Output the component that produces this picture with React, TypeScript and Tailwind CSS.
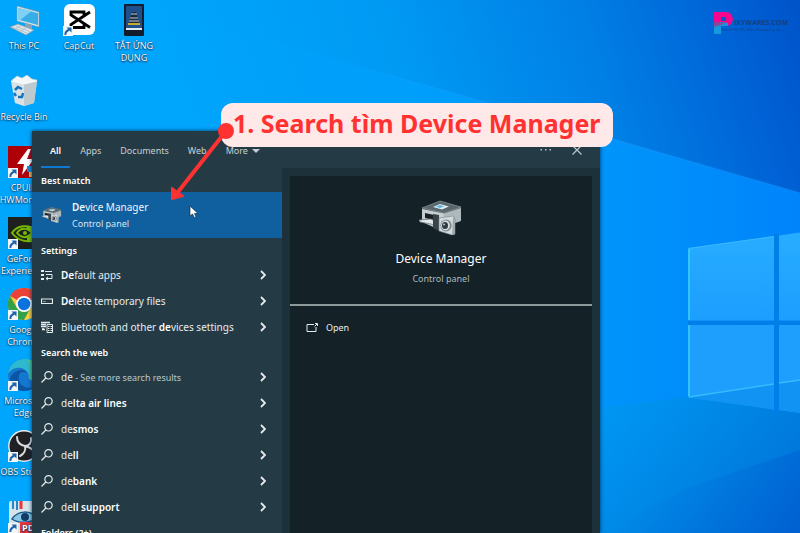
import { clsx } from 'clsx';
import { type ReactNode, useState } from 'react';

interface TextPart {
  text: string;
  strong?: boolean;
  muted?: boolean;
}

interface ResultItem {
  id: string;
  icon: ReactNode;
  parts: TextPart[];
}

interface Shortcut {
  name: string;
  icon: ReactNode;
  linked?: boolean;
  hideLabel?: boolean;
}

const TABS = ['All', 'Apps', 'Documents', 'Web'];

function Wallpaper() {
  return (
    <svg
      className="absolute inset-0 size-full"
      viewBox="0 0 800 533"
      preserveAspectRatio="none"
      aria-hidden="true"
    >
      <defs>
        <linearGradient id="sky" gradientUnits="userSpaceOnUse" x1="150" y1="230" x2="800" y2="20">
          <stop offset="0.1" stopColor="#00a6fc" />
          <stop offset="0.42" stopColor="#009af3" />
          <stop offset="0.7" stopColor="#007fe5" />
          <stop offset="0.9" stopColor="#0062d6" />
          <stop offset="1" stopColor="#0054ca" />
        </linearGradient>
        <linearGradient id="beam" gradientUnits="userSpaceOnUse" x1="200" y1="0" x2="800" y2="0">
          <stop offset="0" stopColor="#00a4fc" stopOpacity="0" />
          <stop offset="0.35" stopColor="#009ffc" />
          <stop offset="0.65" stopColor="#0096fb" />
          <stop offset="1" stopColor="#0084fa" />
        </linearGradient>
        <linearGradient id="ray" gradientUnits="userSpaceOnUse" x1="330" y1="0" x2="800" y2="0">
          <stop offset="0" stopColor="#1ba0ff" stopOpacity="0" />
          <stop offset="0.4" stopColor="#1ba0ff" stopOpacity="0.5" />
          <stop offset="1" stopColor="#1b90ff" stopOpacity="0.3" />
        </linearGradient>
        <linearGradient id="floor" gradientUnits="userSpaceOnUse" x1="600" y1="400" x2="780" y2="540">
          <stop offset="0" stopColor="#0098f4" />
          <stop offset="0.5" stopColor="#0086e5" />
          <stop offset="1" stopColor="#0070d7" />
        </linearGradient>
        <linearGradient id="deep" gradientUnits="userSpaceOnUse" x1="670" y1="450" x2="790" y2="533">
          <stop offset="0" stopColor="#0078de" stopOpacity="0" />
          <stop offset="1" stopColor="#0062d2" />
        </linearGradient>
        <linearGradient id="pane" x1="0" y1="0" x2="0" y2="1">
          <stop offset="0" stopColor="#27adff" />
          <stop offset="1" stopColor="#1c9eff" />
        </linearGradient>
      </defs>
      <rect width="800" height="533" fill="url(#sky)" />
      <path d="M200 20L400 78L800 193V533H200Z" fill="url(#beam)" />
      <path d="M330 58L400 78L800 193" fill="none" stroke="url(#ray)" strokeWidth="1.500" />
      <path d="M560 412L688 397L800 413V533H560Z" fill="url(#floor)" />
      <path d="M600 533L690 487L800 450V533Z" fill="url(#deep)" />
      <path d="M774 234H779V412H774ZM688 320.500H800V325H688Z" fill="#007fe8" />
      <path d="M688 248L774 236V320.500H688ZM779 235.500L800 232.500V320.500H779Z" fill="url(#pane)" />
      <path d="M688 325H774V409.500L688 397.500ZM779 325H800V413L779 410Z" fill="#1f9ffd" />
      <path d="M688 397.500L774 384V409.500ZM779 383L800 380V413L779 410Z" fill="#0b8eee" fillOpacity="0.7" />
      <path d="M689 396V325M689 320V249" fill="none" stroke="#3ad0ff" strokeWidth="1.500" />
      <path d="M689 248.500L774 236.500" stroke="#3ab8ff" />
      <path d="M689 397L774 384M779 383L800 380" stroke="#35bcff" strokeWidth="1.500" />
    </svg>
  );
}

function PcIcon() {
  return (
    <svg viewBox="0 0 32 32" className="size-8">
      <path d="M9 2L31 8V23L9 17Z" fill="#d5e4ec" stroke="#7c98a8" strokeWidth="0.6" />
      <path d="M10.500 4L30 9.300V21L10.500 15.800Z" fill="#38aee8" />
      <path d="M10.500 4L23 7.500L12 16.200L10.500 15.800Z" fill="#7fd0f5" />
      <path d="M17 19L24 21V25L17 23Z" fill="#8ba3b0" />
      <path d="M2 23L10 20L26 26L18 31Z" fill="#dce6ea" stroke="#8799a3" strokeWidth="0.7" />
      <path d="M5 23.500L19 29M8 22.300L22 27.500M8 25L13 21.500M13 27L18 23.500" stroke="#a6b5bd" strokeWidth="0.7" />
    </svg>
  );
}

function CapCutIcon() {
  return (
    <svg viewBox="0 0 32 32" className="size-8">
      <rect x="1" width="31" height="31" rx="6" fill="#fff" />
      <path
        d="M27 8L8 20.500V23.500H21V20.500M27 23.500L8 11V8H21V11"
        fill="none"
        stroke="#000"
        strokeWidth="2.800"
      />
    </svg>
  );
}

function PhoneIcon() {
  return (
    <svg viewBox="0 0 32 32" className="size-8">
      <rect x="6" y="0" width="20" height="32" rx="1" fill="#131c2d" />
      <rect x="8" y="2" width="16" height="22" fill="#20508c" />
      <path d="M14 8H18L22 21H10Z" fill="#182b3c" />
      <path d="M13 10H19M12 14H20M11 17H21" stroke="#c8ccd2" />
      <path d="M10 20H22" stroke="#c9ab32" strokeWidth="2" />
      <path d="M8 25H24" stroke="#e6edf2" strokeWidth="2" />
    </svg>
  );
}

function BinIcon() {
  return (
    <svg viewBox="0 0 32 32" className="size-8">
      <path d="M4 5L9 1L14 3L19 0L24 4L29 5L26 12H6Z" fill="#f4f7f8" stroke="#b8c4ca" strokeWidth="0.6" />
      <path d="M3 6L16 9L29 6L26 28L16 31L7 28Z" fill="#d9e2e6" />
      <path d="M16 9L29 6L26 28L16 31Z" fill="#bdcad0" />
      <path d="M3 6L16 9L29 6" fill="none" stroke="#f7fafb" />
      <path d="M7 15L10 12L14 14M15 18L14 22L10 22M8 21L6 18" fill="none" stroke="#1673bd" strokeWidth="2.500" />
    </svg>
  );
}

function CpuIcon() {
  return (
    <svg viewBox="0 0 32 32" className="size-8">
      <rect width="32" height="32" fill="#ad0009" />
      <path d="M20 3L9 18H16L14 29L26 13H19L23 3Z" fill="#fff" />
      <path d="M19 20H32V26H19Z" fill="#1687d4" />
      <path d="M21 26H32V31H21Z" fill="#e6b84c" />
    </svg>
  );
}

function GeForceIcon() {
  return (
    <svg viewBox="0 0 32 32" className="size-8">
      <rect width="32" height="32" fill="#1d201f" />
      <path d="M4 16C9 8 20 7 29 13V23C20 26 10 24 4 16Z" fill="none" stroke="#77b900" strokeWidth="2" />
      <path d="M9 16C13 10 20 11 24 16C19 22 13 21 9 16Z" fill="none" stroke="#77b900" strokeWidth="2" />
      <circle cx="17" cy="16" r="2" fill="#77b900" />
      <path d="M19 9H29V24H19V21L25 16L19 12Z" fill="#77b900" />
    </svg>
  );
}

function ChromeIcon() {
  return (
    <svg viewBox="0 0 32 32" className="size-8">
      <circle cx="16" cy="16" r="16" fill="#ffcd41" />
      <path d="M16 16L2.100 8A16 16 0 0 1 29.900 8Z" fill="#ea4236" />
      <path d="M2.100 8A16 16 0 0 0 16 32L22.500 20L16 16L9 20Z" fill="#34a048" />
      <circle cx="16" cy="16" r="8" fill="#fff" />
      <circle cx="16" cy="16" r="6.200" fill="#0a73e0" />
    </svg>
  );
}

function EdgeIcon() {
  return (
    <svg viewBox="0 0 32 32" className="size-8">
      <circle cx="16" cy="16" r="16" fill="#1477d0" />
      <path d="M0 15C1 5 9 0 16 0C26 0 32 7 32 15C32 20 28 22 23 21C19 20 22 18 20 14C16 7 5 7 0 15Z" fill="#2fb9cf" />
      <path d="M18 0C27 1 32 8 32 15C32 20 28 22 23 21C20 19 26 6 18 0Z" fill="#4cca90" />
      <path d="M11 16C9 26 18 31 26 28C20 35 2 33 2 20C4 12 15 8 19 14C15 12 12 13 11 16Z" fill="#0b56a4" />
    </svg>
  );
}

function ObsIcon() {
  return (
    <svg viewBox="0 0 32 32" className="size-8">
      <circle cx="16" cy="16" r="15.200" fill="#201f22" stroke="#e8ecef" strokeWidth="1.400" />
      <path
        d="M9 7C9 12 12 15 17 16C21 16 24 13 23 8M17 16C18 20 16 24 12 26M17 16C21 17 25 19 27 23"
        fill="none"
        stroke="#d8dde0"
        strokeWidth="2"
        strokeLinecap="round"
      />
    </svg>
  );
}

function PdfIcon() {
  return (
    <svg viewBox="0 0 32 32" className="size-8">
      <rect x="1" width="31" height="32" rx="2" fill="#d7e4ea" />
      <path d="M5 0V8M9 0V9" stroke="#2484cf" strokeWidth="2" />
      <path d="M13 0V8" stroke="#e43a3a" strokeWidth="3" />
      <path d="M4 18C10 9 22 9 30 17C22 22 11 23 4 18Z" fill="#8bc7e4" stroke="#15598a" strokeWidth="1.500" />
      <circle cx="17" cy="16" r="4" fill="#123e66" />
      <rect x="12" y="21" width="20" height="11" fill="#e5353b" />
      <text x="14" y="30" fontSize="9" fontWeight="700" fill="#fff">
        PDF
      </text>
    </svg>
  );
}

function DeviceIcon({ className }: { className: string }) {
  return (
    <svg viewBox="0 0 44 36" className={className} aria-hidden="true">
      <path d="M3 8L21 1L42 7L40 14L22 16L3 12Z" fill="#4e5a5f" />
      <path d="M3 8L21 1L42 7L25 13Z" fill="#59666c" stroke="#8f9da2" strokeWidth="0.6" />
      <path d="M14 7L21 4L30 6.500L23 9.500Z" fill="#dceaf0" />
      <path d="M17 6.700L21 5L25 6.200L21 8Z" fill="#5db1e2" />
      <path d="M3 9L25 13.500V31L19 29L3 22Z" fill="#c6ced1" />
      <path d="M25 13.500L42 8V21L25 27Z" fill="#aeb9bd" />
      <path d="M6 13L15 15V20L6 18Z" fill="#172126" />
      <path d="M0 20L12 19L17 22V25L1 22Z" fill="#e3e8ea" stroke="#606c72" strokeWidth="0.7" />
      <path d="M14 14L20 15V31L14 28Z" fill="#38444a" />
      <path d="M20 18L34 16L36 18V34L33 35L20 31Z" fill="#d4dadc" stroke="#768389" strokeWidth="0.6" />
      <path d="M34 17L36 18V34L33 35Z" fill="#9da9ad" />
      <ellipse cx="27" cy="25.500" rx="5.600" ry="6" fill="#77848a" />
      <ellipse cx="26.500" cy="25.500" rx="4.400" ry="4.900" fill="#d5dcdf" />
      <ellipse cx="26" cy="25.500" rx="3" ry="3.500" fill="#313c42" />
      <circle cx="25" cy="24.500" r="1" fill="#b3c4cc" />
    </svg>
  );
}

function ListIcon() {
  return (
    <svg viewBox="0 0 12 12" className="size-3" fill="none" stroke="currentColor">
      <path d="M0 2H3M0 6H3M0 10H3" strokeWidth="2" />
      <path d="M4 2.500H11M5 5.500H11V9.500H5M7 8L5 9.500L7 11" />
    </svg>
  );
}

function DriveIcon() {
  return (
    <svg viewBox="0 0 12 12" className="size-3" fill="none" stroke="currentColor">
      <path d="M0.500 4H11.500V8.500H0.500Z" strokeWidth="1.200" />
      <path d="M2 6.500H5" strokeOpacity="0.5" />
    </svg>
  );
}

function DevicesIcon() {
  return (
    <svg viewBox="0 0 12 12" className="size-3" fill="none" stroke="currentColor">
      <path d="M0 1.500H9M0 3.500H5M0 5.500H5M2 7V8M1 8.500H4" strokeWidth="1.500" />
      <path d="M6 3.500H11.500V11.500H6Z" />
      <path d="M7 5.500H8.500M9.500 5.500H11M7 7.500H8.500M9.500 7.500H11M7 9.500H8.500M9.500 9.500H11" />
    </svg>
  );
}

function SearchIcon() {
  return (
    <svg viewBox="0 0 12 12" className="size-3" fill="none" stroke="currentColor" strokeWidth="1.200">
      <circle cx="7.500" cy="4.300" r="3.700" />
      <path d="M4.900 7L0.500 11.500" />
    </svg>
  );
}

function ShortcutArrow() {
  return (
    <svg viewBox="0 0 10 10" className="absolute bottom-0 left-0 size-2.5" aria-hidden="true">
      <rect width="10" height="10" fill="#f4f6f7" />
      <path d="M3.500 1.500H8.500V6.500Z" fill="#1f63ad" />
      <path d="M2.500 9C2 6.500 3.500 4.800 6.500 3.500" fill="none" stroke="#1f63ad" strokeWidth="2" />
    </svg>
  );
}

const SHORTCUTS: Shortcut[] = [
  { name: 'This PC', icon: <PcIcon /> },
  { name: 'Recycle Bin', icon: <BinIcon /> },
  { name: 'CPUID HWMonitor', icon: <CpuIcon />, linked: true },
  { name: 'GeForce Experience', icon: <GeForceIcon />, linked: true },
  { name: 'Google Chrome', icon: <ChromeIcon />, linked: true },
  { name: 'Microsoft Edge', icon: <EdgeIcon />, linked: true },
  { name: 'OBS Studio', icon: <ObsIcon />, linked: true },
  { name: 'PDF', icon: <PdfIcon />, linked: true, hideLabel: true },
  { name: 'CapCut', icon: <CapCutIcon />, linked: true },
];

const SETTINGS: ResultItem[] = [
  { id: 'default', icon: <ListIcon />, parts: [{ text: 'De', strong: true }, { text: 'fault apps' }] },
  { id: 'temp', icon: <DriveIcon />, parts: [{ text: 'De', strong: true }, { text: 'lete temporary files' }] },
  {
    id: 'bluetooth',
    icon: <DevicesIcon />,
    parts: [{ text: 'Bluetooth and other ' }, { text: 'de', strong: true }, { text: 'vices settings' }],
  },
];

const WEB_RESULTS: ResultItem[] = [
  {
    id: 'de',
    icon: <SearchIcon />,
    parts: [{ text: 'de' }, { text: ' - See more search results', muted: true }],
  },
  ...['lta air lines', 'smos', 'll', 'bank', 'll support'].map((rest) => ({
    id: rest,
    icon: <SearchIcon />,
    parts: [{ text: 'de' }, { text: rest, strong: true }],
  })),
];

function DesktopShortcut({ name, icon, linked, hideLabel }: Shortcut) {
  return (
    <button
      type="button"
      aria-label={name}
      className="flex h-[71px] w-12 flex-col items-center gap-1 text-center text-[9px] text-white leading-3 [text-shadow:0_1px_2px_#00284d,0_0_1px_#00284d]"
    >
      <span className="relative shrink-0">
        {icon}
        {linked && <ShortcutArrow />}
      </span>
      {!hideLabel && name}
    </button>
  );
}

function ChevronIcon() {
  return (
    <svg viewBox="0 0 6 10" className="ml-auto h-2.5 w-1.5 shrink-0" fill="none" stroke="currentColor" strokeWidth="1.800">
      <path d="M1 1L5 5L1 9" />
    </svg>
  );
}

function SectionTitle({ children }: { children: ReactNode }) {
  return <h2 className="flex h-6 items-center px-[9px] pt-0.5 font-semibold text-[9px] text-white">{children}</h2>;
}

function ResultRow({ icon, parts }: ResultItem) {
  return (
    <li>
      <button type="button" className="flex h-[26px] w-full items-center gap-2 pr-4 pl-[9px] text-left text-[10px]">
        <span className="shrink-0">{icon}</span>
        <span className="whitespace-pre">
          {parts.map((part) => (
            <span
              key={part.text}
              className={clsx(part.strong && 'font-semibold text-white', part.muted && 'text-[#bcc7cb] text-[9px]')}
            >
              {part.text}
            </span>
          ))}
        </span>
        <ChevronIcon />
      </button>
    </li>
  );
}

function SearchWindow() {
  const [active, setActive] = useState('All');

  return (
    <main className="absolute top-[131px] right-1/4 bottom-0 left-[4%] flex flex-col overflow-hidden bg-[#243b45] font-['Noto_Sans',sans-serif] text-[#e6ecee] shadow-[0_0_4px_#00305a]">
      <header className="flex h-[37px] shrink-0 items-stretch gap-px pr-[18px] pl-[9px] text-[9px]">
        {TABS.map((tab) => (
          <button
            key={tab}
            type="button"
            onClick={() => setActive(tab)}
            className={clsx(
              'border-b-2 px-[9px] pt-1',
              active === tab ? 'border-[#0f78d0] font-semibold text-white' : 'border-transparent text-[#c6d0d4]'
            )}
          >
            {tab}
          </button>
        ))}
        <button type="button" className="flex items-center gap-1 border-transparent border-b-2 px-[9px] pt-1 text-[#c6d0d4]">
          More
          <svg viewBox="0 0 8 4" className="h-1 w-2" fill="currentColor">
            <path d="M0 0H8L4 4Z" />
          </svg>
        </button>
        <div className="ml-auto flex items-center gap-5 text-[#b9c4c8]">
          <button type="button" aria-label="Options">
            <svg viewBox="0 0 12 10" className="h-2.5 w-3" fill="currentColor">
              <path d="M0.500 4H2V5.500H0.500ZM5 4H6.500V5.500H5ZM9.500 4H11V5.500H9.500Z" />
            </svg>
          </button>
          <button type="button" aria-label="Close">
            <svg viewBox="0 0 10 10" className="size-2.5" stroke="currentColor" strokeWidth="1.300">
              <path d="M0.500 0.500L9.500 9.500M9.500 0.500L0.500 9.500" />
            </svg>
          </button>
        </div>
      </header>

      <div className="flex min-h-0 flex-1">
        <section className="w-[44%] shrink-0">
          <SectionTitle>Best match</SectionTitle>
          <button type="button" className="flex h-[46px] w-full items-center gap-2.5 bg-[#105f9f] px-2.5 text-left">
            <DeviceIcon className="h-5 w-5 shrink-0" />
            <span className="flex flex-col">
              <span className="text-[#eef5fa] text-[10px] leading-[18px]">
                <span className="font-semibold">De</span>vice Manager
              </span>
              <span className="text-[#d8e6f0] text-[9px] leading-4">Control panel</span>
            </span>
          </button>
          <SectionTitle>Settings</SectionTitle>
          <ul>
            {SETTINGS.map((item) => (
              <ResultRow key={item.id} {...item} />
            ))}
          </ul>
          <SectionTitle>Search the web</SectionTitle>
          <ul>
            {WEB_RESULTS.map((item) => (
              <ResultRow key={item.id} {...item} />
            ))}
          </ul>
          <SectionTitle>Folders (2+)</SectionTitle>
        </section>

        <section className="flex flex-1 flex-col bg-[#1d313a] px-2 pt-2">
          <div className="flex-1 bg-[#142127]">
            <div className="flex flex-col items-center border-[#8e999b] border-b-2 pt-6 pb-4">
              <DeviceIcon className="h-9 w-11" />
              <h1 className="mt-3 text-[12px] text-white leading-[22px]">Device Manager</h1>
              <p className="text-[#aebabd] text-[9px] leading-[18px]">Control panel</p>
            </div>
            <button type="button" className="flex h-11 items-center gap-2 px-4 text-[9px]">
              <svg viewBox="0 0 12 10" className="h-2.5 w-3" fill="none" stroke="currentColor">
                <path d="M8 1.500H1V8.500H10V4M8.500 3.500L11 1" />
                <path d="M9 0.500H11.500V3" />
              </svg>
              Open
            </button>
          </div>
        </section>
      </div>
    </main>
  );
}

function BrandLogo() {
  return (
    <div className="absolute top-3 right-3 flex items-start text-[#14417f]">
      <svg viewBox="0 0 20 23" className="h-[23px] w-5 shrink-0" aria-hidden="true">
        <path d="M0 0H12C21 0 21 14 12 14H0Z" fill="#f5068d" />
        <path d="M7 5H12V9H7Z" fill="#0a58c2" />
        <path d="M0 13L7 10L14 11V14H7V22H0Z" fill="#1599dc" />
        <path d="M0 10L7 11L13 10L7 13L0 15Z" fill="#7f4d9c" />
      </svg>
      <div className="flex flex-col pt-1.5">
        <span className="font-bold text-[7px] leading-[10px]">IXYWARES.COM</span>
        <span className="-ml-3 whitespace-nowrap text-[3px] leading-[5px]">Hub of VPN, VPS, Office, Windows Key, etc.</span>
      </div>
    </div>
  );
}

function Annotation() {
  return (
    <>
      <p className="absolute top-[103px] left-[221px] whitespace-nowrap rounded-xl bg-[#ffe9e8] px-3 pb-1 font-['Noto_Sans',sans-serif] font-bold text-[#ff3131] text-[25px] leading-10">
        1. Search tìm Device Manager
      </p>
      <svg className="absolute top-[122px] left-[168px] h-20 w-[68px]" viewBox="0 0 68 80" aria-hidden="true">
        <path d="M58 9L10 70" stroke="#ff3131" strokeWidth="4" />
        <circle cx="58" cy="9" r="8" fill="#ff3131" />
        <path d="M4 66L15 74L4 77Z" fill="#ff3131" stroke="#ff3131" strokeWidth="2" strokeLinejoin="round" />
      </svg>
      <svg className="absolute top-[205px] left-[189px] h-3.5 w-2.5" viewBox="0 0 10 14" aria-hidden="true">
        <path d="M1 1V11L3.500 9L5.500 13L7 12L5.500 8.500H9Z" fill="#fff" stroke="#12304a" strokeWidth="0.7" />
      </svg>
    </>
  );
}

export default function App() {
  return (
    <div className="relative h-screen overflow-hidden bg-[#00a6fc] font-['Open_Sans','Noto_Sans',sans-serif]">
      <Wallpaper />
      <nav className="relative grid w-max auto-cols-max grid-flow-col grid-rows-[repeat(8,71px)] gap-x-[7px] pt-1" aria-label="Desktop">
        {SHORTCUTS.map((shortcut) => (
          <DesktopShortcut key={shortcut.name} {...shortcut} />
        ))}
        <div className="col-start-3 row-start-1">
          <DesktopShortcut name="TẮT ỨNG DỤNG" icon={<PhoneIcon />} />
        </div>
      </nav>
      <SearchWindow />
      <BrandLogo />
      <Annotation />
    </div>
  );
}
